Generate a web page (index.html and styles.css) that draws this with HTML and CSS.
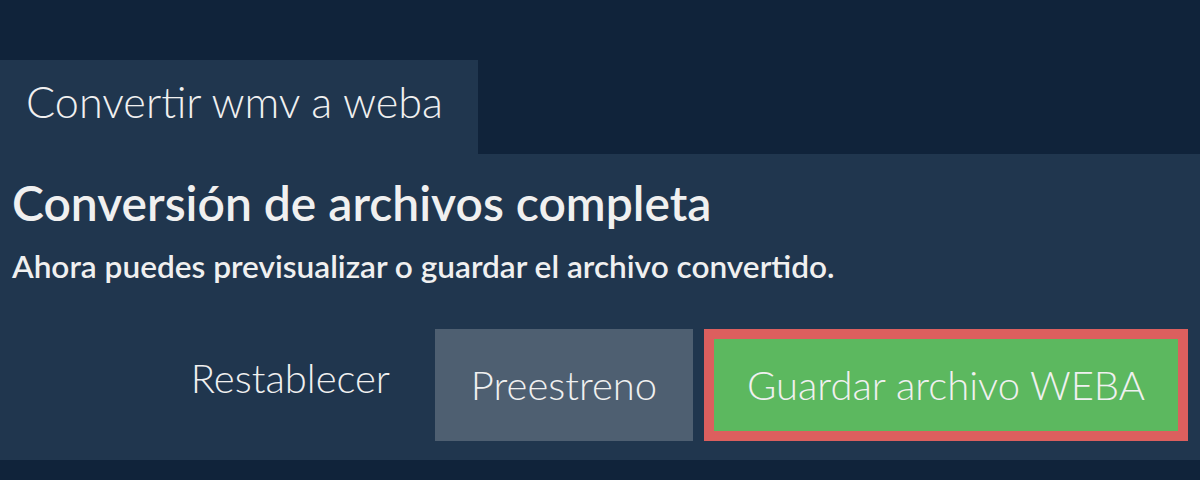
FILE: index.html
```html
<!DOCTYPE html>
<html>
<head>
    <title>Convertir wmv a weba</title>
    <link rel="stylesheet" href="styles.css">
</head>
<body>

<div class="tabs">
    <div class="tab">Convertir wmv a weba</div>
</div>

<div class="panel">
    <h2>Conversión de archivos completa</h2>
    <p class="note">Ahora puedes previsualizar o guardar el archivo convertido.</p>

    <div class="actions">
        <button class="reset">Restablecer</button>
        <button class="preview">Preestreno</button>
        <button class="save">Guardar archivo WEBA</button>
    </div>
</div>

</body>
</html>
```

FILE: styles.css
```css
:root {
    --bg-color: #10233a;
    --panel-bg: #20364e;
    --text-color: #f0f0f0;
    --preview-bg: #4e5f71;
    --save-bg: #5cb85f;
    --save-border: #dc5f5e;
}

body {
    margin: 0;
    font-family: Lato, "Open Sans", sans-serif;
    background-color: var(--bg-color);
    color: var(--text-color);
}

.tabs {
    padding-top: 60px;
    display: flex;
}

.tab {
    width: 478px;
    height: 94px;
    box-sizing: border-box;
    padding: 16px 0 0 26px;
    background-color: var(--panel-bg);
    font-size: 43.2px;
    font-weight: 300;
    line-height: 1.2;
}

.panel {
    height: 306px;
    box-sizing: border-box;
    padding: 20px 12px 0 12px;
    background-color: var(--panel-bg);
}

.panel h2 {
    margin: 0;
    font-size: 48px;
    font-weight: 600;
    line-height: 1.2;
}

.note {
    margin: 16px 0 0 0;
    font-size: 31.6px;
    font-weight: 600;
    line-height: 1.2;
}

.actions {
    display: flex;
    justify-content: flex-end;
    align-items: flex-start;
    gap: 11px;
    margin-top: 43px;
}

button {
    font-family: inherit;
    font-size: 40px;
    font-weight: 300;
    color: var(--text-color);
    border: none;
    cursor: pointer;
    height: 112px;
    box-sizing: border-box;
}

.reset {
    background: none;
    padding: 0 34px 14px 0;
}

.preview {
    width: 258px;
    background-color: var(--preview-bg);
}

.save {
    width: 484px;
    background-color: var(--save-bg);
    border: 10px solid var(--save-border);
}
```
